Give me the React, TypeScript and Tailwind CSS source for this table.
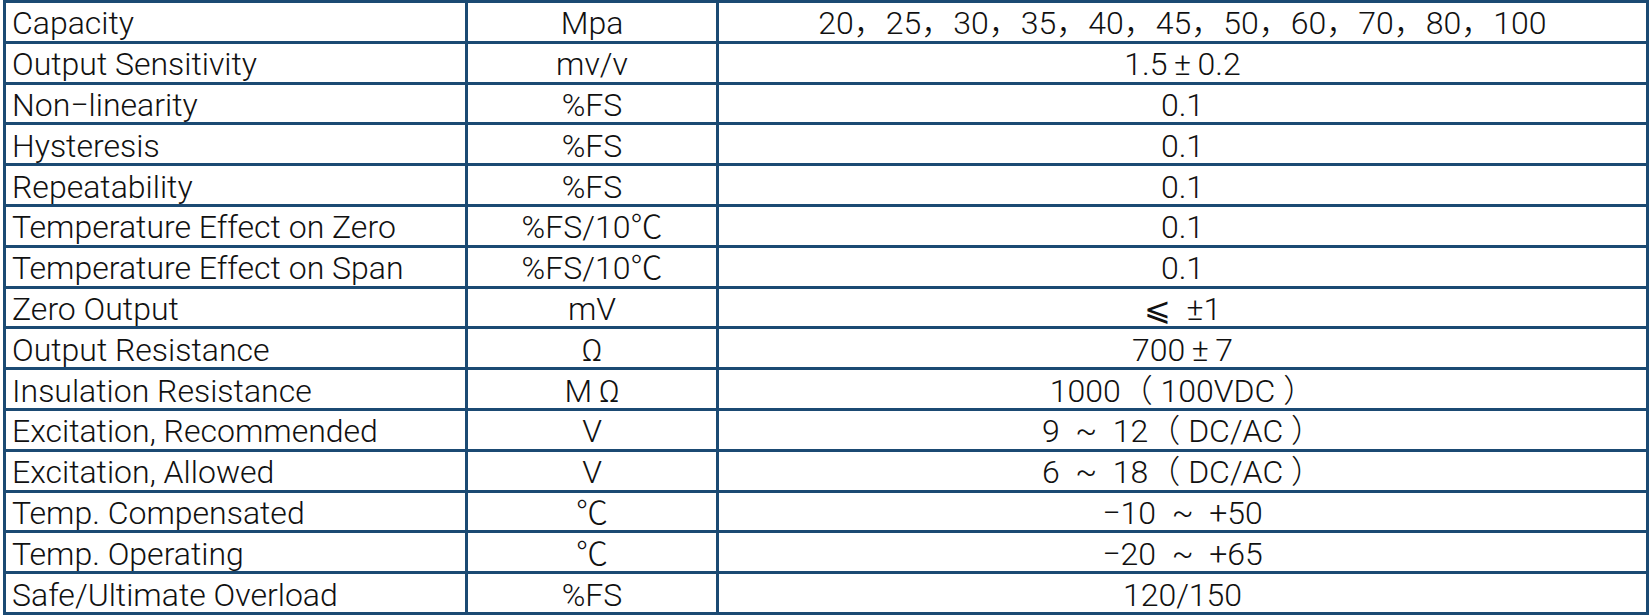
import React from "react";

type SpecRow = {
  name: string;
  unit: string;
  value: string;
};

const rows: SpecRow[] = [
  { name: "Capacity", unit: "Mpa", value: "20，25，30，35，40，45，50，60，70，80，100" },
  { name: "Output Sensitivity", unit: "mv/v", value: "1.5\u2009±\u20090.2" },
  { name: "Non−linearity", unit: "%FS", value: "0.1" },
  { name: "Hysteresis", unit: "%FS", value: "0.1" },
  { name: "Repeatability", unit: "%FS", value: "0.1" },
  { name: "Temperature Effect on Zero", unit: "%FS/10℃", value: "0.1" },
  { name: "Temperature Effect on Span", unit: "%FS/10℃", value: "0.1" },
  { name: "Zero Output", unit: "mV", value: "⩽  ±1" },
  { name: "Output Resistance", unit: "Ω", value: "700\u2009±\u20097" },
  { name: "Insulation Resistance", unit: "M\u2009Ω", value: "1000（ 100VDC ）" },
  { name: "Excitation, Recommended", unit: "V", value: "9  ~  12（ DC/AC ）" },
  { name: "Excitation, Allowed", unit: "V", value: "6  ~  18（ DC/AC ）" },
  { name: "Temp. Compensated", unit: "℃", value: "−10  ~  +50" },
  { name: "Temp. Operating", unit: "℃", value: "−20  ~  +65" },
  { name: "Safe/Ultimate Overload", unit: "%FS", value: "120/150" },
];

export default function App() {
  return (
    <div className="w-[1651px] h-[615px] overflow-hidden bg-white pl-[3px] font-['Roboto','Noto_Sans_CJK_JP','DejaVu_Sans',sans-serif] font-light text-[32px] leading-none text-[#111]">
      <table className="table-fixed border-collapse w-[1646px]">
        <colgroup>
          <col className="w-[462px]" />
          <col className="w-[251px]" />
          <col />
        </colgroup>
        <tbody>
          {rows.map((row) => (
            <tr key={row.name} className="h-[40.8px]">
              <td className="border-[3px] border-[#1b4a73] pl-[6px] pt-[3px] text-left whitespace-pre">
                {row.name}
              </td>
              <td className="border-[3px] border-[#1b4a73] pt-[3px] text-center whitespace-pre">
                {row.unit}
              </td>
              <td className="border-[3px] border-[#1b4a73] pt-[3px] text-center whitespace-pre">
                {row.value}
              </td>
            </tr>
          ))}
        </tbody>
      </table>
    </div>
  );
}
